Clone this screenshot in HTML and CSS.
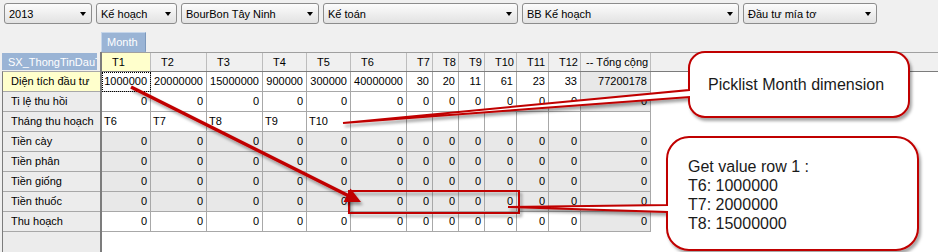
FILE: index.html
```html
<!DOCTYPE html>
<html lang="vi">
<head>
<meta charset="utf-8">
<title>Pivot</title>
<link rel="stylesheet" href="styles.css">
</head>
<body>
<div class="toolbar">
  <div class="dd w1"><span>2013</span><i class="arr"></i></div>
  <div class="dd w2"><span>Kế hoạch</span><i class="arr"></i></div>
  <div class="dd w3"><span>BourBon Tây Ninh</span><i class="arr"></i></div>
  <div class="dd w4"><span>Kế toán</span><i class="arr"></i></div>
  <div class="dd w5"><span>BB Kế hoạch</span><i class="arr"></i></div>
  <div class="dd w6"><span>Đầu tư mía tơ</span><i class="arr"></i></div>
</div>
<div class="tabrow"><div class="month">Month</div></div>
<div class="grid">
  <div class="rhcol">
    <div class="rhtitle">SX_ThongTinDauTu</div>
    <div class="rhbody">
      <div class="rh sel">Diện tích đầu tư</div>
      <div class="rh">Ti lệ thu hồi</div>
      <div class="rh">Tháng thu hoạch</div>
      <div class="rh">Tiền cày</div>
      <div class="rh">Tiền phân</div>
      <div class="rh">Tiền giống</div>
      <div class="rh">Tiền thuốc</div>
      <div class="rh">Thu hoạch</div>
    </div>
  </div>
  <div class="data">
    <div class="hrow">
      <div class="h sel">T1</div><div class="h">T2</div><div class="h">T3</div><div class="h">T4</div><div class="h">T5</div><div class="h">T6</div><div class="h">T7</div><div class="h">T8</div><div class="h">T9</div><div class="h">T10</div><div class="h">T11</div><div class="h">T12</div><div class="h tothead">-- Tổng cộng</div><div class="hfill"></div>
    </div>
    <div class="row">
      <div class="c focus">1000000</div><div class="c">20000000</div><div class="c">15000000</div><div class="c">900000</div><div class="c">300000</div><div class="c">40000000</div><div class="c">30</div><div class="c">20</div><div class="c">11</div><div class="c">61</div><div class="c">23</div><div class="c">33</div><div class="c tot">77200178</div>
    </div>
    <div class="row">
      <div class="c">0</div><div class="c">0</div><div class="c">0</div><div class="c">0</div><div class="c">0</div><div class="c">0</div><div class="c">0</div><div class="c">0</div><div class="c">0</div><div class="c">0</div><div class="c">0</div><div class="c">0</div><div class="c tot">0</div>
    </div>
    <div class="row txt">
      <div class="c">T6</div><div class="c">T7</div><div class="c">T8</div><div class="c">T9</div><div class="c">T10</div><div class="c"></div><div class="c"></div><div class="c"></div><div class="c"></div><div class="c"></div><div class="c"></div><div class="c"></div><div class="c"></div>
    </div>
    <div class="row g">
      <div class="c">0</div><div class="c">0</div><div class="c">0</div><div class="c">0</div><div class="c">0</div><div class="c">0</div><div class="c">0</div><div class="c">0</div><div class="c">0</div><div class="c">0</div><div class="c">0</div><div class="c">0</div><div class="c tot">0</div>
    </div>
    <div class="row g">
      <div class="c">0</div><div class="c">0</div><div class="c">0</div><div class="c">0</div><div class="c">0</div><div class="c">0</div><div class="c">0</div><div class="c">0</div><div class="c">0</div><div class="c">0</div><div class="c">0</div><div class="c">0</div><div class="c tot">0</div>
    </div>
    <div class="row g">
      <div class="c">0</div><div class="c">0</div><div class="c">0</div><div class="c">0</div><div class="c">0</div><div class="c">0</div><div class="c">0</div><div class="c">0</div><div class="c">0</div><div class="c">0</div><div class="c">0</div><div class="c">0</div><div class="c tot">0</div>
    </div>
    <div class="row g">
      <div class="c">0</div><div class="c">0</div><div class="c">0</div><div class="c">0</div><div class="c">0</div><div class="c">0</div><div class="c">0</div><div class="c">0</div><div class="c">0</div><div class="c">0</div><div class="c">0</div><div class="c">0</div><div class="c tot">0</div>
    </div>
    <div class="row">
      <div class="c">0</div><div class="c">0</div><div class="c">0</div><div class="c">0</div><div class="c">0</div><div class="c">0</div><div class="c">0</div><div class="c">0</div><div class="c">0</div><div class="c">0</div><div class="c">0</div><div class="c">0</div><div class="c tot">0</div>
    </div>
  </div>
</div>

<svg class="overlay" width="938" height="252" viewBox="0 0 938 252">
  <defs>
    <filter id="sh" x="-20%" y="-20%" width="140%" height="160%">
      <feDropShadow dx="2" dy="3" stdDeviation="1.6" flood-color="#000" flood-opacity="0.35"/>
    </filter>
  </defs>
  <rect x="349" y="191" width="170" height="22" fill="none" stroke="#c00000" stroke-width="2" filter="url(#sh)"/>
  <g filter="url(#sh)">
    <line x1="131" y1="87" x2="349" y2="196" stroke="#c00000" stroke-width="3.5"/>
    <polygon points="361,202 343.5,202 350.5,188.5" fill="#c00000"/>
  </g>
  <path filter="url(#sh)" fill="#fff" stroke="#c00000" stroke-width="2" d="M705 52 H893 A16 16 0 0 1 909 68 V101 A16 16 0 0 1 893 117 H705 A16 16 0 0 1 689 101 V97 L343 123 L689 90 V68 A16 16 0 0 1 705 52 Z"/>
  <path filter="url(#sh)" fill="#fff" stroke="#c00000" stroke-width="2" d="M689 137 H896 A22 22 0 0 1 918 159 V228 A22 22 0 0 1 896 250 H689 A22 22 0 0 1 667 228 V212 L508 207 L667 205 V159 A22 22 0 0 1 689 137 Z"/>
</svg>
<div class="ctext c1">Picklist Month dimension</div>
<div class="ctext c2">Get value row 1 :<br>T6: 1000000<br>T7: 2000000<br>T8: 15000000</div>
</body>
</html>
```

FILE: styles.css
```css
html, body {
  margin: 0;
  padding: 0;
}
body {
  width: 938px;
  height: 252px;
  overflow: hidden;
  position: relative;
  background: #f0f0f0;
  font-family: "Liberation Sans", Arial, sans-serif;
  font-size: 11px;
  color: #000;
}

/* toolbar */
.toolbar {
  display: flex;
  gap: 4px;
  padding: 3px 0 0 4px;
  height: 21px;
}
.dd {
  height: 21px;
  box-sizing: border-box;
  border: 1px solid #8c8c8c;
  border-radius: 3px;
  background: linear-gradient(#fcfcfc, #e2e2e2);
  display: flex;
  align-items: center;
  padding: 0 5px 0 4px;
  white-space: nowrap;
}
.dd .arr {
  margin-left: auto;
  width: 0;
  height: 0;
  border-left: 3.5px solid transparent;
  border-right: 3.5px solid transparent;
  border-top: 4px solid #000;
}
.w1 { width: 88px; }
.w2 { width: 81px; }
.w3 { width: 138px; }
.w4 { width: 195px; }
.w5 { width: 217px; }
.w6 { width: 134px; }

/* month tab */
.tabrow {
  margin-top: 8px;
  padding-left: 101px;
  height: 20px;
}
.month {
  width: 45px;
  height: 20px;
  box-sizing: border-box;
  background: #9ab4d5;
  color: #fff;
  padding-left: 5px;
  line-height: 18px;
  border: 1px solid;
  border-color: #c6d6ea #7d99bc #9ab4d5 #c6d6ea;
}

/* grid */
.grid {
  display: flex;
  height: 200px;
}
.rhcol {
  width: 98px;
  margin-left: 2px;
  display: flex;
  flex-direction: column;
}
.rhtitle {
  height: 17px;
  margin: 1px 3px 1px 0;
  background: #9ab4d5;
  color: #fff;
  padding-left: 6px;
  line-height: 18px;
  overflow: hidden;
  white-space: nowrap;
}
.rhbody {
  flex: 1;
  background: #ececec;
  border-left: 1px solid #7c7c7c;
  border-top: 1px solid #a8a8a8;
}
.rh {
  height: 20px;
  box-sizing: border-box;
  border-bottom: 1px solid #a8a8a8;
  padding-left: 8px;
  line-height: 19px;
  white-space: nowrap;
}
.rh.sel { background: #ffffcc; }

.data {
  flex: 1;
  border-left: 2px solid #7c7c7c;
  background: #fff;
}
.hrow, .row {
  display: grid;
  grid-template-columns: 49px 56px 56px 44px 44px 56px 26px 26px 26px 32px 32px 32px 70px;
}
.hrow {
  grid-template-columns: 49px 56px 56px 44px 44px 56px 26px 26px 26px 32px 32px 32px 70px 1fr;
  height: 20px;
  box-sizing: border-box;
  border-top: 1px solid #a0a0a0;
  border-bottom: 1px solid #7c7c7c;
  background: #f0f0f0;
}
.h {
  border-right: 1px solid #bdbdbd;
  padding-left: 10px;
  line-height: 18px;
  white-space: nowrap;
}
.h.sel { background: #ffffcc; }
.h.tothead { padding-left: 5px; }

.row { height: 20px; }
.c {
  box-sizing: border-box;
  border-right: 1px solid #a8a8a8;
  border-bottom: 1px solid #a8a8a8;
  text-align: right;
  padding-right: 3px;
  line-height: 19px;
  white-space: nowrap;
}
.row.g .c, .c.tot { background: #e8e8e8; }
.row.txt .c { text-align: left; padding-left: 2px; }
.c.focus {
  outline: 1px dotted #000;
  outline-offset: -1px;
}

/* overlay */
.overlay {
  position: absolute;
  left: 0;
  top: 0;
  pointer-events: none;
}
.ctext {
  position: absolute;
  font-size: 16px;
  line-height: 19px;
  color: #1a1a1a;
  white-space: nowrap;
}
.c1 { left: 708px; top: 75px; }
.c2 { left: 688px; top: 157px; }
```
